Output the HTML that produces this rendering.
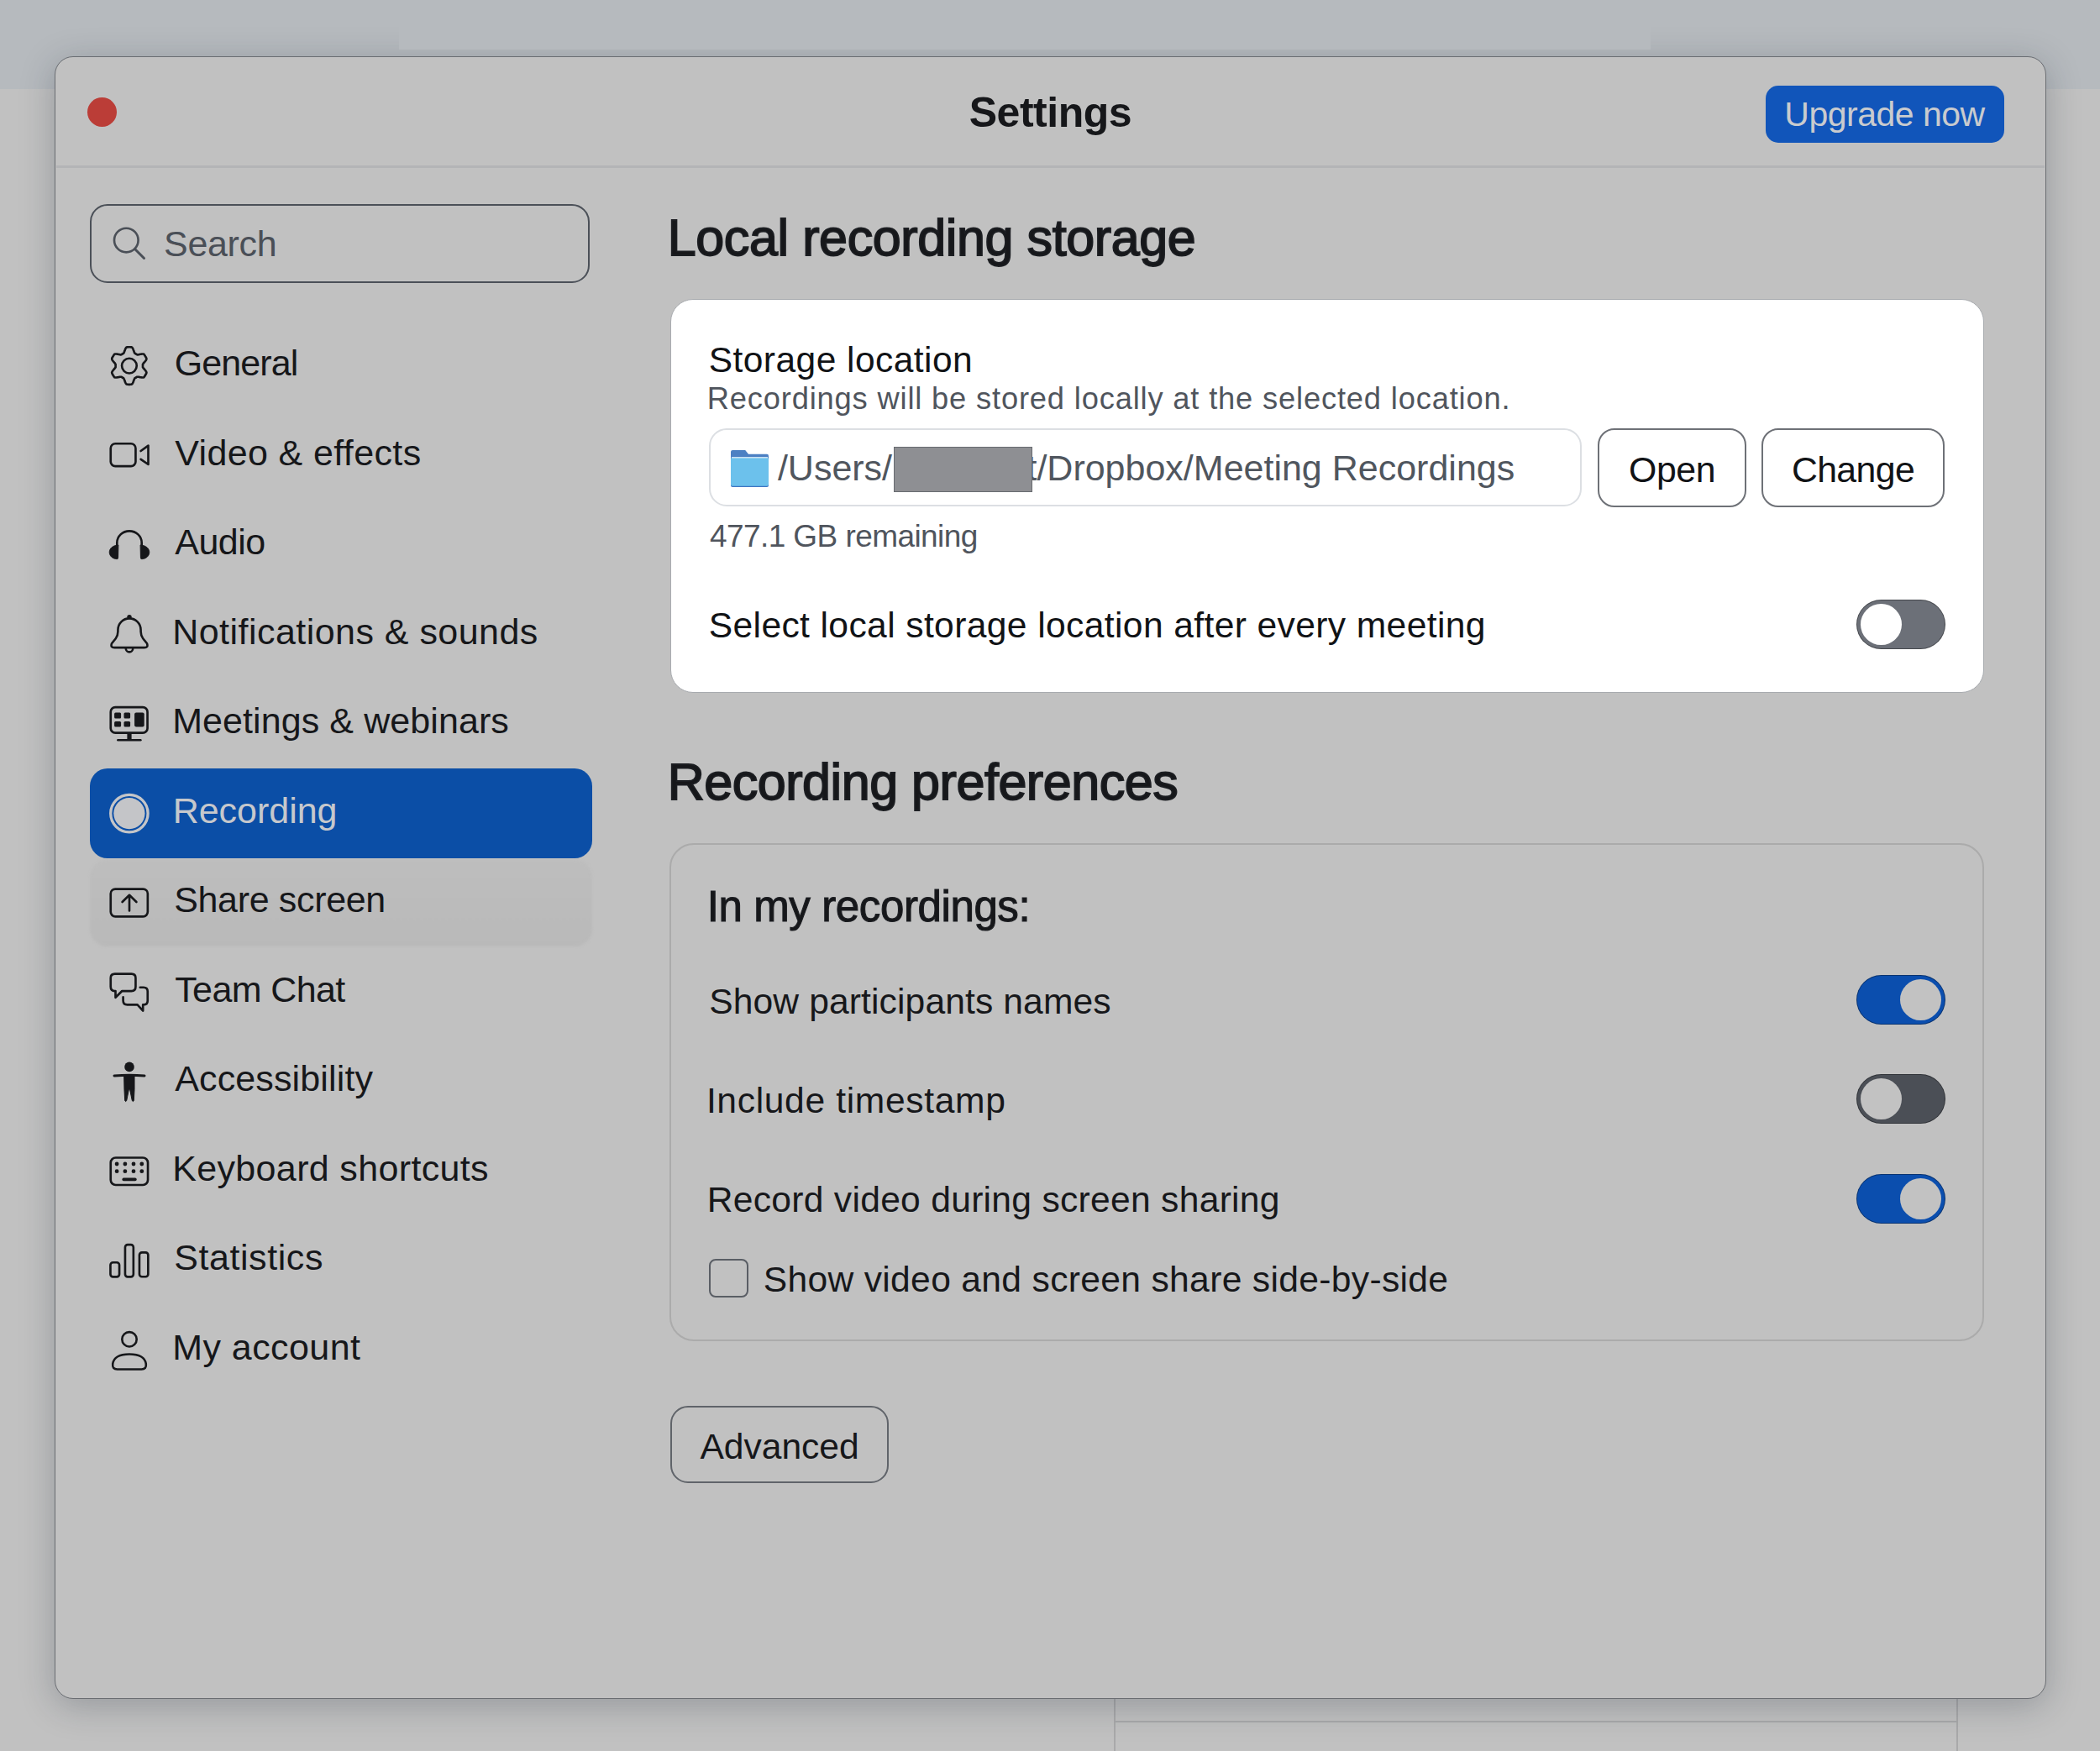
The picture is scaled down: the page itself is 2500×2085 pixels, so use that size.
<!DOCTYPE html>
<html><head><meta charset="utf-8"><style>
html,body{margin:0;padding:0;}
body{width:2500px;height:2085px;position:relative;overflow:hidden;background:#c1c1c1;font-family:"Liberation Sans",sans-serif;}
.a{position:absolute;}
.t{position:absolute;white-space:pre;line-height:1;}
</style></head><body>
<div class="a" style="left:0;top:0;width:2500px;height:106px;background:#b6babe;"></div>
<div class="a" style="left:1326px;top:2023px;width:1005px;height:70px;box-sizing:border-box;border-left:2px solid #a9a9aa;border-right:2px solid #a9a9aa;"></div>
<div class="a" style="left:1326px;top:2049px;width:1003px;height:2px;background:#a9a9aa;"></div>
<div class="a" style="left:65px;top:67px;width:2370.5px;height:1956px;box-sizing:border-box;background:#c1c1c1;border:1.5px solid #6a6d72;border-radius:22px;box-shadow:0 8px 40px rgba(25,35,50,.26);"></div>
<div class="a" style="left:475px;top:0;width:1490px;height:59px;background:#b6babe;"></div>
<div class="a" style="left:66.5px;top:197.3px;width:2367.50px;height:2.70px;background:#b3b4b6;"></div>
<div class="a" style="left:103.9px;top:115.5px;width:35.00px;height:35.00px;background:#bb3d37;border-radius:50%;"></div>
<div class="a" style="left:2102px;top:102.3px;width:283.70px;height:67.40px;background:#1155ba;border-radius:15px;"></div>
<div class="a" style="left:107.2px;top:243.2px;width:594.50px;height:93.80px;box-sizing:border-box;border:2.5px solid #4b5058;border-radius:21px;"></div>
<div class="a" style="left:107px;top:1024px;width:598.00px;height:103.00px;background:linear-gradient(#bdbdbd,#b9b9b9);border-radius:21px;filter:blur(1.5px);"></div>
<div class="a" style="left:107px;top:915px;width:598.00px;height:107.00px;background:#0b4ea6;border-radius:21px;"></div>
<div class="a" style="left:797.5px;top:356.3px;width:1564.50px;height:468.70px;box-sizing:border-box;background:#fff;border:1.5px solid #a8abaf;border-radius:27px;"></div>
<div class="a" style="left:844.2px;top:510.3px;width:1038.80px;height:93.00px;box-sizing:border-box;border:2.5px solid #dcdfe3;border-radius:21px;"></div>
<div class="a" style="left:1902.2px;top:510.4px;width:176.40px;height:93.20px;box-sizing:border-box;border:2px solid #6e7177;border-radius:20px;"></div>
<div class="a" style="left:2097.4px;top:510.4px;width:217.90px;height:93.20px;box-sizing:border-box;border:2px solid #6e7177;border-radius:20px;"></div>
<div class="a" style="left:797px;top:1004px;width:1565.00px;height:593.00px;box-sizing:border-box;border:2px solid #ababab;border-radius:29px;"></div>
<div class="a" style="left:844.3px;top:1499px;width:46.70px;height:45.80px;box-sizing:border-box;border:2.5px solid #5a5e65;border-radius:8px;"></div>
<div class="a" style="left:797.6px;top:1674.3px;width:260.00px;height:91.90px;box-sizing:border-box;border:2.5px solid #60646a;border-radius:21px;"></div>
<div class="a" style="left:2210px;top:714px;width:106.00px;height:59.00px;background:#6c7078;border-radius:30px;box-sizing:border-box;border:1px solid rgba(0,0,0,.35);"></div><div class="a" style="left:2215px;top:718.8px;width:49.00px;height:49.00px;background:#ffffff;border-radius:50%;"></div>
<div class="a" style="left:2210px;top:1161px;width:106.00px;height:59.00px;background:#0b4eae;border-radius:30px;box-sizing:border-box;border:1px solid rgba(0,0,0,.35);"></div><div class="a" style="left:2262px;top:1165.8px;width:49.00px;height:49.00px;background:#c2c2c2;border-radius:50%;"></div>
<div class="a" style="left:2210px;top:1279px;width:106.00px;height:59.00px;background:#4b4f56;border-radius:30px;box-sizing:border-box;border:1px solid rgba(0,0,0,.35);"></div><div class="a" style="left:2215px;top:1283.8px;width:49.00px;height:49.00px;background:#c2c2c2;border-radius:50%;"></div>
<div class="a" style="left:2210px;top:1398px;width:106.00px;height:59.00px;background:#0b4eae;border-radius:30px;box-sizing:border-box;border:1px solid rgba(0,0,0,.35);"></div><div class="a" style="left:2262px;top:1402.8px;width:49.00px;height:49.00px;background:#c2c2c2;border-radius:50%;"></div>
<svg class="a" style="left:0;top:0" width="2500" height="2085" viewBox="0 0 2500 2085" fill="none" stroke="#16171a" stroke-width="2.65" stroke-linecap="round" stroke-linejoin="round">
<!-- search -->
<g stroke="#4a4f57"><circle cx="150.3" cy="286" r="14.3"/><path d="M160.8,296.8L171.5,307.5" stroke-width="3"/></g>
<!-- gear -->
<path d="M153.8,413.2L154.2,413.2L154.6,413.2L155.0,413.2L155.4,413.3L155.7,413.3L156.1,413.3L156.5,413.4L156.9,413.5L157.2,413.7L157.6,414.1L157.9,414.6L158.1,415.0L158.4,415.6L158.6,416.1L158.8,416.7L159.0,417.2L159.2,417.8L159.4,418.3L159.6,418.8L159.7,419.2L159.9,419.6L160.1,420.0L160.2,420.3L160.4,420.6L160.7,420.8L160.9,420.9L161.2,421.1L161.4,421.2L161.7,421.3L161.9,421.5L162.1,421.6L162.4,421.8L162.6,421.9L162.9,422.1L163.1,422.2L163.4,422.3L163.7,422.3L164.1,422.3L164.5,422.3L164.9,422.2L165.4,422.1L165.9,422.0L166.5,421.9L167.0,421.8L167.6,421.7L168.2,421.6L168.8,421.5L169.3,421.5L169.9,421.5L170.4,421.5L170.9,421.6L171.3,421.8L171.6,422.1L171.8,422.4L172.1,422.7L172.3,423.0L172.5,423.4L172.7,423.7L172.9,424.0L173.1,424.4L173.3,424.7L173.5,425.0L173.7,425.4L173.8,425.7L174.0,426.1L174.2,426.4L174.3,426.8L174.4,427.2L174.4,427.6L174.2,428.1L174.0,428.6L173.7,429.0L173.4,429.5L173.0,430.0L172.6,430.5L172.3,430.9L171.9,431.3L171.5,431.7L171.2,432.1L170.9,432.5L170.6,432.8L170.4,433.2L170.2,433.5L170.0,433.8L170.0,434.1L170.0,434.4L170.0,434.7L170.0,434.9L170.0,435.2L170.0,435.5L170.0,435.8L170.0,436.1L170.0,436.3L170.0,436.6L170.0,436.9L170.0,437.2L170.2,437.5L170.4,437.8L170.6,438.2L170.9,438.5L171.2,438.9L171.5,439.3L171.9,439.7L172.3,440.1L172.6,440.5L173.0,441.0L173.4,441.5L173.7,442.0L174.0,442.4L174.2,442.9L174.4,443.4L174.4,443.8L174.3,444.2L174.2,444.6L174.0,444.9L173.8,445.3L173.7,445.6L173.5,446.0L173.3,446.3L173.1,446.6L172.9,447.0L172.7,447.3L172.5,447.6L172.3,448.0L172.1,448.3L171.8,448.6L171.6,448.9L171.3,449.2L170.9,449.4L170.4,449.5L169.9,449.5L169.3,449.5L168.8,449.5L168.2,449.4L167.6,449.3L167.0,449.2L166.5,449.1L165.9,449.0L165.4,448.9L164.9,448.8L164.5,448.7L164.1,448.7L163.7,448.7L163.4,448.7L163.1,448.8L162.9,448.9L162.6,449.1L162.4,449.2L162.1,449.4L161.9,449.5L161.7,449.7L161.4,449.8L161.2,449.9L160.9,450.1L160.7,450.2L160.4,450.4L160.2,450.7L160.1,451.0L159.9,451.4L159.7,451.8L159.6,452.2L159.4,452.7L159.2,453.2L159.0,453.8L158.8,454.3L158.6,454.9L158.4,455.4L158.1,456.0L157.9,456.4L157.6,456.9L157.2,457.3L156.9,457.5L156.5,457.6L156.1,457.7L155.7,457.7L155.4,457.7L155.0,457.8L154.6,457.8L154.2,457.8L153.8,457.8L153.4,457.8L153.0,457.8L152.6,457.8L152.2,457.7L151.9,457.7L151.5,457.7L151.1,457.6L150.7,457.5L150.4,457.3L150.0,456.9L149.7,456.4L149.5,456.0L149.2,455.4L149.0,454.9L148.8,454.3L148.6,453.8L148.4,453.2L148.2,452.7L148.0,452.2L147.9,451.8L147.7,451.4L147.5,451.0L147.4,450.7L147.2,450.4L146.9,450.2L146.7,450.1L146.4,449.9L146.2,449.8L145.9,449.7L145.7,449.5L145.5,449.4L145.2,449.2L145.0,449.1L144.7,448.9L144.5,448.8L144.2,448.7L143.9,448.7L143.5,448.7L143.1,448.7L142.7,448.8L142.2,448.9L141.7,449.0L141.1,449.1L140.6,449.2L140.0,449.3L139.4,449.4L138.8,449.5L138.3,449.5L137.7,449.5L137.2,449.5L136.7,449.4L136.3,449.2L136.0,448.9L135.8,448.6L135.5,448.3L135.3,448.0L135.1,447.6L134.9,447.3L134.7,447.0L134.5,446.7L134.3,446.3L134.1,446.0L133.9,445.6L133.8,445.3L133.6,444.9L133.4,444.6L133.3,444.2L133.2,443.8L133.2,443.4L133.4,442.9L133.6,442.4L133.9,442.0L134.2,441.5L134.6,441.0L135.0,440.5L135.3,440.1L135.7,439.7L136.1,439.3L136.4,438.9L136.7,438.5L137.0,438.2L137.2,437.8L137.4,437.5L137.6,437.2L137.6,436.9L137.6,436.6L137.6,436.3L137.6,436.1L137.6,435.8L137.6,435.5L137.6,435.2L137.6,434.9L137.6,434.7L137.6,434.4L137.6,434.1L137.6,433.8L137.4,433.5L137.2,433.2L137.0,432.8L136.7,432.5L136.4,432.1L136.1,431.7L135.7,431.3L135.3,430.9L135.0,430.5L134.6,430.0L134.2,429.5L133.9,429.0L133.6,428.6L133.4,428.1L133.2,427.6L133.2,427.2L133.3,426.8L133.4,426.4L133.6,426.1L133.8,425.7L133.9,425.4L134.1,425.0L134.3,424.7L134.5,424.4L134.7,424.0L134.9,423.7L135.1,423.4L135.3,423.0L135.5,422.7L135.8,422.4L136.0,422.1L136.3,421.8L136.7,421.6L137.2,421.5L137.7,421.5L138.3,421.5L138.8,421.5L139.4,421.6L140.0,421.7L140.6,421.8L141.1,421.9L141.7,422.0L142.2,422.1L142.7,422.2L143.1,422.3L143.5,422.3L143.9,422.3L144.2,422.3L144.5,422.2L144.7,422.1L145.0,421.9L145.2,421.8L145.5,421.6L145.7,421.5L145.9,421.3L146.2,421.2L146.4,421.1L146.7,420.9L146.9,420.8L147.2,420.6L147.4,420.3L147.5,420.0L147.7,419.6L147.9,419.2L148.0,418.8L148.2,418.3L148.4,417.8L148.6,417.2L148.8,416.7L149.0,416.1L149.2,415.6L149.5,415.0L149.7,414.6L150.0,414.1L150.4,413.7L150.7,413.5L151.1,413.4L151.5,413.3L151.9,413.3L152.2,413.3L152.6,413.2L153.0,413.2L153.4,413.2Z"/><circle cx="153.9" cy="435.6" r="8.85"/>
<!-- video -->
<rect x="131.75" y="528.25" width="29.7" height="26.9" rx="5.5"/>
<path d="M167.6,537L176.5,530.6V553L167.6,546.8"/>
<!-- headphones -->
<path d="M139.3,662.8V646.3A14.7,14 0 0 1 168.7,646.3V662.8"/>
<path d="M140.6,649C134.2,649.3 130.2,653.2 130.2,657.5C130.2,662 134,665.4 139.2,665.7Q140.7,665.7 140.6,664.2Z" fill="#16171a" stroke-width="0.8"/>
<path d="M167.4,649C173.8,649.3 177.8,653.2 177.8,657.5C177.8,662 174,665.4 168.8,665.7Q167.3,665.7 167.4,664.2Z" fill="#16171a" stroke-width="0.8"/>
<!-- bell -->
<g stroke-width="2.6"><path d="M136.3,771.1H171.7Q176.8,771.1 175,766.3L170.2,760.2Q167.7,757 167.6,752V750A13.6,13.6 0 0 0 140.4,750V752Q140.3,757 137.8,760.2L133,766.3Q131.2,771.1 136.3,771.1Z"/>
<circle cx="154" cy="734.6" r="2.7" fill="#16171a" stroke="none"/>
<path d="M149.8,772.2A4.2,4.2 0 0 0 158.2,772.2"/></g>
<!-- meetings -->
<rect x="131.75" y="842.15" width="43.8" height="30.5" rx="5.5"/>
<g fill="#16171a" stroke="none">
<rect x="136.1" y="848.6" width="8" height="6.8" rx="1.5"/><rect x="147.5" y="848.6" width="7.6" height="6.8" rx="1.5"/>
<rect x="136.1" y="859" width="8" height="6.6" rx="1.5"/><rect x="147.5" y="859" width="7.6" height="6.6" rx="1.5"/>
<rect x="160.1" y="848.6" width="11.6" height="17" rx="2"/>
<rect x="151.4" y="873" width="5.2" height="8"/>
</g>
<path d="M140.4,881.2H167.3"/>
<!-- recording -->
<circle cx="153.9" cy="968.6" r="22.2" stroke="#c4c5c8" stroke-width="3.3"/>
<circle cx="153.9" cy="968.6" r="18.6" fill="#c4c5c8" stroke="none"/>
<!-- share -->
<rect x="131.75" y="1058.55" width="44.1" height="32.8" rx="5.5"/>
<path d="M154,1084.5V1066.5M145.6,1074L154,1065.8L162.4,1074"/>
<!-- team chat -->
<path d="M145.3,1180.05H156.45Q161.45,1180.05 161.45,1175.05V1164.55Q161.45,1159.55 156.45,1159.55H136.75Q131.75,1159.55 131.75,1164.55V1175.05Q131.75,1180.05 136.75,1180.05H137.5V1187.8Z"/>
<path d="M166.8,1175.75H170.9Q175.75,1175.75 175.75,1180.6V1191.4Q175.75,1196.3 170.9,1196.3H170.2V1203.6L163.6,1196.3H151.5Q146.6,1196.3 146.6,1191.4V1187.4"/>
<!-- accessibility -->
<circle cx="154" cy="1270.4" r="5.8" fill="#16171a" stroke="none"/>
<path d="M136,1281Q154,1279.6 172,1281" stroke-width="3"/>
<path d="M148,1281H160V1297.5L159.3,1310.6Q158.5,1312.6 157.3,1310.6L154.6,1297.2H153.4L150.7,1310.6Q149.5,1312.6 148.7,1310.6L148,1297.5Z" fill="#16171a" stroke-width="1"/>
<!-- keyboard -->
<rect x="131.75" y="1378.45" width="44.3" height="32.6" rx="6"/>
<g fill="#16171a" stroke="none">
<circle cx="139.1" cy="1386" r="2.4"/><circle cx="148.9" cy="1386" r="2.4"/><circle cx="159" cy="1386" r="2.4"/><circle cx="168.8" cy="1386" r="2.4"/>
<circle cx="139.1" cy="1394.7" r="2.4"/><circle cx="148.9" cy="1394.7" r="2.4"/><circle cx="159" cy="1394.7" r="2.4"/><circle cx="168.8" cy="1394.7" r="2.4"/>
</g>
<path d="M147.2,1404.4H160.9" stroke-width="3.6"/>
<!-- stats -->
<rect x="131.45" y="1503.25" width="10.6" height="17.1" rx="3"/>
<rect x="148.95" y="1482.15" width="9.9" height="38.2" rx="3"/>
<rect x="165.95" y="1491.35" width="10.4" height="28.9" rx="3"/>
<!-- account -->
<circle cx="154" cy="1594.8" r="8.7" stroke-width="2.6"/>
<path d="M139.5,1630.5H168.5Q174.5,1630.5 173.8,1624Q172,1612.5 154,1612.5Q136,1612.5 134.2,1624Q133.5,1630.5 139.5,1630.5Z" stroke-width="2.6"/>
<!-- folder -->
<g stroke="none">
<path d="M870,538Q870,535.9 872.2,535.9H887.2L891,540.8H913Q915,540.8 915,543V546H870Z" fill="#4c80c3"/>
<rect x="870" y="544.8" width="45" height="35.2" rx="2" fill="#3d74c2"/>
<rect x="870" y="544.8" width="45" height="34" rx="2" fill="#6cc1ec"/>
<rect x="871" y="544.2" width="43" height="1.2" fill="#e9f3fb"/>
</g>
</svg>
<div class="t" style="left:207.70px;top:411.10px;font-size:43px;color:#16171a;letter-spacing:-0.912px;">General</div>
<div class="t" style="left:208.20px;top:517.60px;font-size:43px;color:#16171a;letter-spacing:0.381px;">Video &amp; effects</div>
<div class="t" style="left:208.20px;top:624.10px;font-size:43px;color:#16171a;letter-spacing:-0.493px;">Audio</div>
<div class="t" style="left:205.20px;top:730.60px;font-size:43px;color:#16171a;letter-spacing:0.463px;">Notifications &amp; sounds</div>
<div class="t" style="left:205.20px;top:837.10px;font-size:43px;color:#16171a;letter-spacing:0.081px;">Meetings &amp; webinars</div>
<div class="t" style="left:205.70px;top:943.60px;font-size:43px;color:#c6c8cc;letter-spacing:-0.022px;">Recording</div>
<div class="t" style="left:207.20px;top:1050.10px;font-size:43px;color:#16171a;letter-spacing:-0.340px;">Share screen</div>
<div class="t" style="left:208.20px;top:1156.60px;font-size:43px;color:#16171a;letter-spacing:-0.613px;">Team Chat</div>
<div class="t" style="left:208.20px;top:1263.10px;font-size:43px;color:#16171a;letter-spacing:0.139px;">Accessibility</div>
<div class="t" style="left:205.20px;top:1369.60px;font-size:43px;color:#16171a;letter-spacing:0.350px;">Keyboard shortcuts</div>
<div class="t" style="left:207.20px;top:1476.10px;font-size:43px;color:#16171a;letter-spacing:0.578px;">Statistics</div>
<div class="t" style="left:205.20px;top:1582.60px;font-size:43px;color:#16171a;letter-spacing:0.440px;">My account</div>
<div class="t" style="left:1153.70px;top:108.98px;font-size:50px;font-weight:700;color:#16171a;letter-spacing:-0.464px;">Settings</div>
<div class="t" style="left:2124.30px;top:116.09px;font-size:41px;color:#c9cbce;letter-spacing:-0.505px;">Upgrade now</div>
<div class="t" style="left:195.10px;top:268.60px;font-size:43px;color:#4a4f57;letter-spacing:-0.341px;">Search</div>
<div class="t" style="left:794.70px;top:253.36px;font-size:61px;color:#16171a;letter-spacing:-0.384px;-webkit-text-stroke:1.8px #1c1e22;">Local recording storage</div>
<div class="t" style="left:843.70px;top:408.02px;font-size:42.5px;color:#111316;letter-spacing:0.455px;">Storage location</div>
<div class="t" style="left:841.70px;top:457.27px;font-size:36.3px;color:#50555d;letter-spacing:0.827px;">Recordings will be stored locally at the selected location.</div>
<div class="t" style="left:844.90px;top:620.38px;font-size:37px;color:#50555d;letter-spacing:-0.566px;">477.1 GB remaining</div>
<div class="t" style="left:1939.10px;top:538.07px;font-size:42.8px;color:#111316;letter-spacing:-0.451px;">Open</div>
<div class="t" style="left:2132.90px;top:538.07px;font-size:42.8px;color:#111316;letter-spacing:-0.621px;">Change</div>
<div class="t" style="left:843.70px;top:723.44px;font-size:42.6px;color:#111316;letter-spacing:0.376px;">Select local storage location after every meeting</div>
<div class="t" style="left:794.70px;top:901.36px;font-size:61px;color:#16171a;letter-spacing:-0.458px;-webkit-text-stroke:1.8px #1c1e22;">Recording preferences</div>
<div class="t" style="left:841.70px;top:1053.53px;font-size:51px;color:#16171a;letter-spacing:-0.386px;-webkit-text-stroke:1.1px #1c1e22;">In my recordings:</div>
<div class="t" style="left:844.20px;top:1171.04px;font-size:42.6px;color:#16171a;letter-spacing:0.116px;">Show participants names</div>
<div class="t" style="left:840.90px;top:1289.14px;font-size:42.6px;color:#16171a;letter-spacing:0.644px;">Include timestamp</div>
<div class="t" style="left:841.70px;top:1407.24px;font-size:42.6px;color:#16171a;letter-spacing:0.286px;">Record video during screen sharing</div>
<div class="t" style="left:908.70px;top:1501.54px;font-size:42.6px;color:#16171a;letter-spacing:0.326px;">Show video and screen share side-by-side</div>
<div class="t" style="left:833.50px;top:1700.94px;font-size:42.6px;color:#16171a;letter-spacing:-0.038px;">Advanced</div>
<div class="t" style="left:925.90px;top:536.40px;font-size:43px;color:#50565e;letter-spacing:0.000px;">/Users/</div>
<div class="t" style="left:1222.45px;top:536.40px;font-size:43px;color:#50565e;letter-spacing:0.000px;">t/Dropbox/Meeting Recordings</div>
<div class="a" style="left:1063.6px;top:531.9px;width:165.30px;height:53.80px;box-sizing:border-box;background:#8e8f93;border:1px solid #686b70;"></div>
</body></html>
